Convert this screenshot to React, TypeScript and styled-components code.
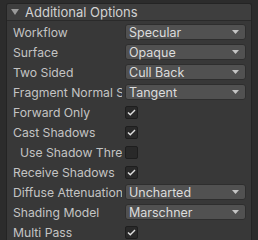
import React from "react";
import styled, { createGlobalStyle } from "styled-components";

const Global = createGlobalStyle`
  html, body { margin: 0; padding: 0; background: #2d2d2d; }
  body { width: 258px; height: 240px; overflow: hidden; font-family: Inter, "Noto Sans", sans-serif; }
`;

const Page = styled.div`
  width: 258px;
  height: 240px;
  display: flex;
  padding: 3px 6px 0 6px;
  box-sizing: border-box;
  background: #2c2c2c;
`;

const Panel = styled.div`
  flex: 1;
  display: flex;
  flex-direction: column;
  background: #383838;
  border: 1px solid #242424;
  border-bottom: none;
  border-radius: 3px 3px 0 0;
  overflow: hidden;
`;

const Header = styled.div`
  height: 18px;
  display: flex;
  align-items: center;
  gap: 6px;
  padding-left: 4px;
  background: #3e3e3e;
  color: #d2d2d2;
  font-size: 13px;
  border-bottom: 1px solid #2a2a2a;
`;

const Caret = styled.svg`
  width: 8px;
  height: 8px;
  flex: none;
`;

const Body = styled.div`
  display: flex;
  flex-direction: column;
  padding-top: 1px;
`;

const Row = styled.div<{ $indent?: boolean }>`
  height: 20px;
  display: grid;
  column-gap: 3px;
  align-items: center;
  padding-left: ${(p) => (p.$indent ? "13px" : "6px")};
  padding-right: 5px;
  grid-template-columns: ${(p) => (p.$indent ? "102px" : "109px")} 1fr;
`;

const Label = styled.div`
  color: #c4c4c4;
  font-size: 12.2px;
  white-space: nowrap;
  overflow: hidden;
`;

const Dropdown = styled.div`
  height: 16px;
  box-sizing: border-box;
  background: #515151;
  border: 1px solid #2e2e2e;
  border-radius: 3px;
  display: flex;
  align-items: center;
  justify-content: space-between;
  padding: 0 6px 0 3px;
  color: #dcdcdc;
  font-size: 12.5px;
`;

const Check = styled.div`
  width: 13px;
  height: 13px;
  box-sizing: border-box;
  background: #292929;
  border: 1px solid #1e1e1e;
  border-radius: 2px;
  display: flex;
  align-items: center;
  justify-content: center;
`;

const Arrow = () => (
  <svg width="7" height="4" viewBox="0 0 7 4">
    <path d="M0 0H7L3.5 4Z" fill="#c4c4c4" />
  </svg>
);

const Tick = () => (
  <svg width="9" height="7" viewBox="0 0 9 7">
    <path d="M1 3.5L3.3 5.8L8 1" stroke="#e0e0e0" strokeWidth="1.4" fill="none" />
  </svg>
);

type Item =
  | { label: string; kind: "dd"; value: string; indent?: boolean }
  | { label: string; kind: "cb"; checked: boolean; indent?: boolean };

const items: Item[] = [
  { label: "Workflow", kind: "dd", value: "Specular" },
  { label: "Surface", kind: "dd", value: "Opaque" },
  { label: "Two Sided", kind: "dd", value: "Cull Back" },
  { label: "Fragment Normal Space", kind: "dd", value: "Tangent" },
  { label: "Forward Only", kind: "cb", checked: true },
  { label: "Cast Shadows", kind: "cb", checked: true },
  { label: "Use Shadow Threshold", kind: "cb", checked: false, indent: true },
  { label: "Receive Shadows", kind: "cb", checked: true },
  { label: "Diffuse Attenuation", kind: "dd", value: "Uncharted" },
  { label: "Shading Model", kind: "dd", value: "Marschner" },
  { label: "Multi Pass", kind: "cb", checked: true },
];

export default function App() {
  return (
    <>
      <Global />
      <Page>
        <Panel>
          <Header>
            <Caret viewBox="0 0 8 8">
              <path d="M0 1H8L4 7Z" fill="#9a9a9a" />
            </Caret>
            Additional Options
          </Header>
          <Body>
            {items.map((it) => (
              <Row key={it.label} $indent={it.indent}>
                <Label>{it.label}</Label>
                {it.kind === "dd" ? (
                  <Dropdown>
                    <span>{it.value}</span>
                    <Arrow />
                  </Dropdown>
                ) : (
                  <Check>{it.checked && <Tick />}</Check>
                )}
              </Row>
            ))}
          </Body>
        </Panel>
      </Page>
    </>
  );
}
